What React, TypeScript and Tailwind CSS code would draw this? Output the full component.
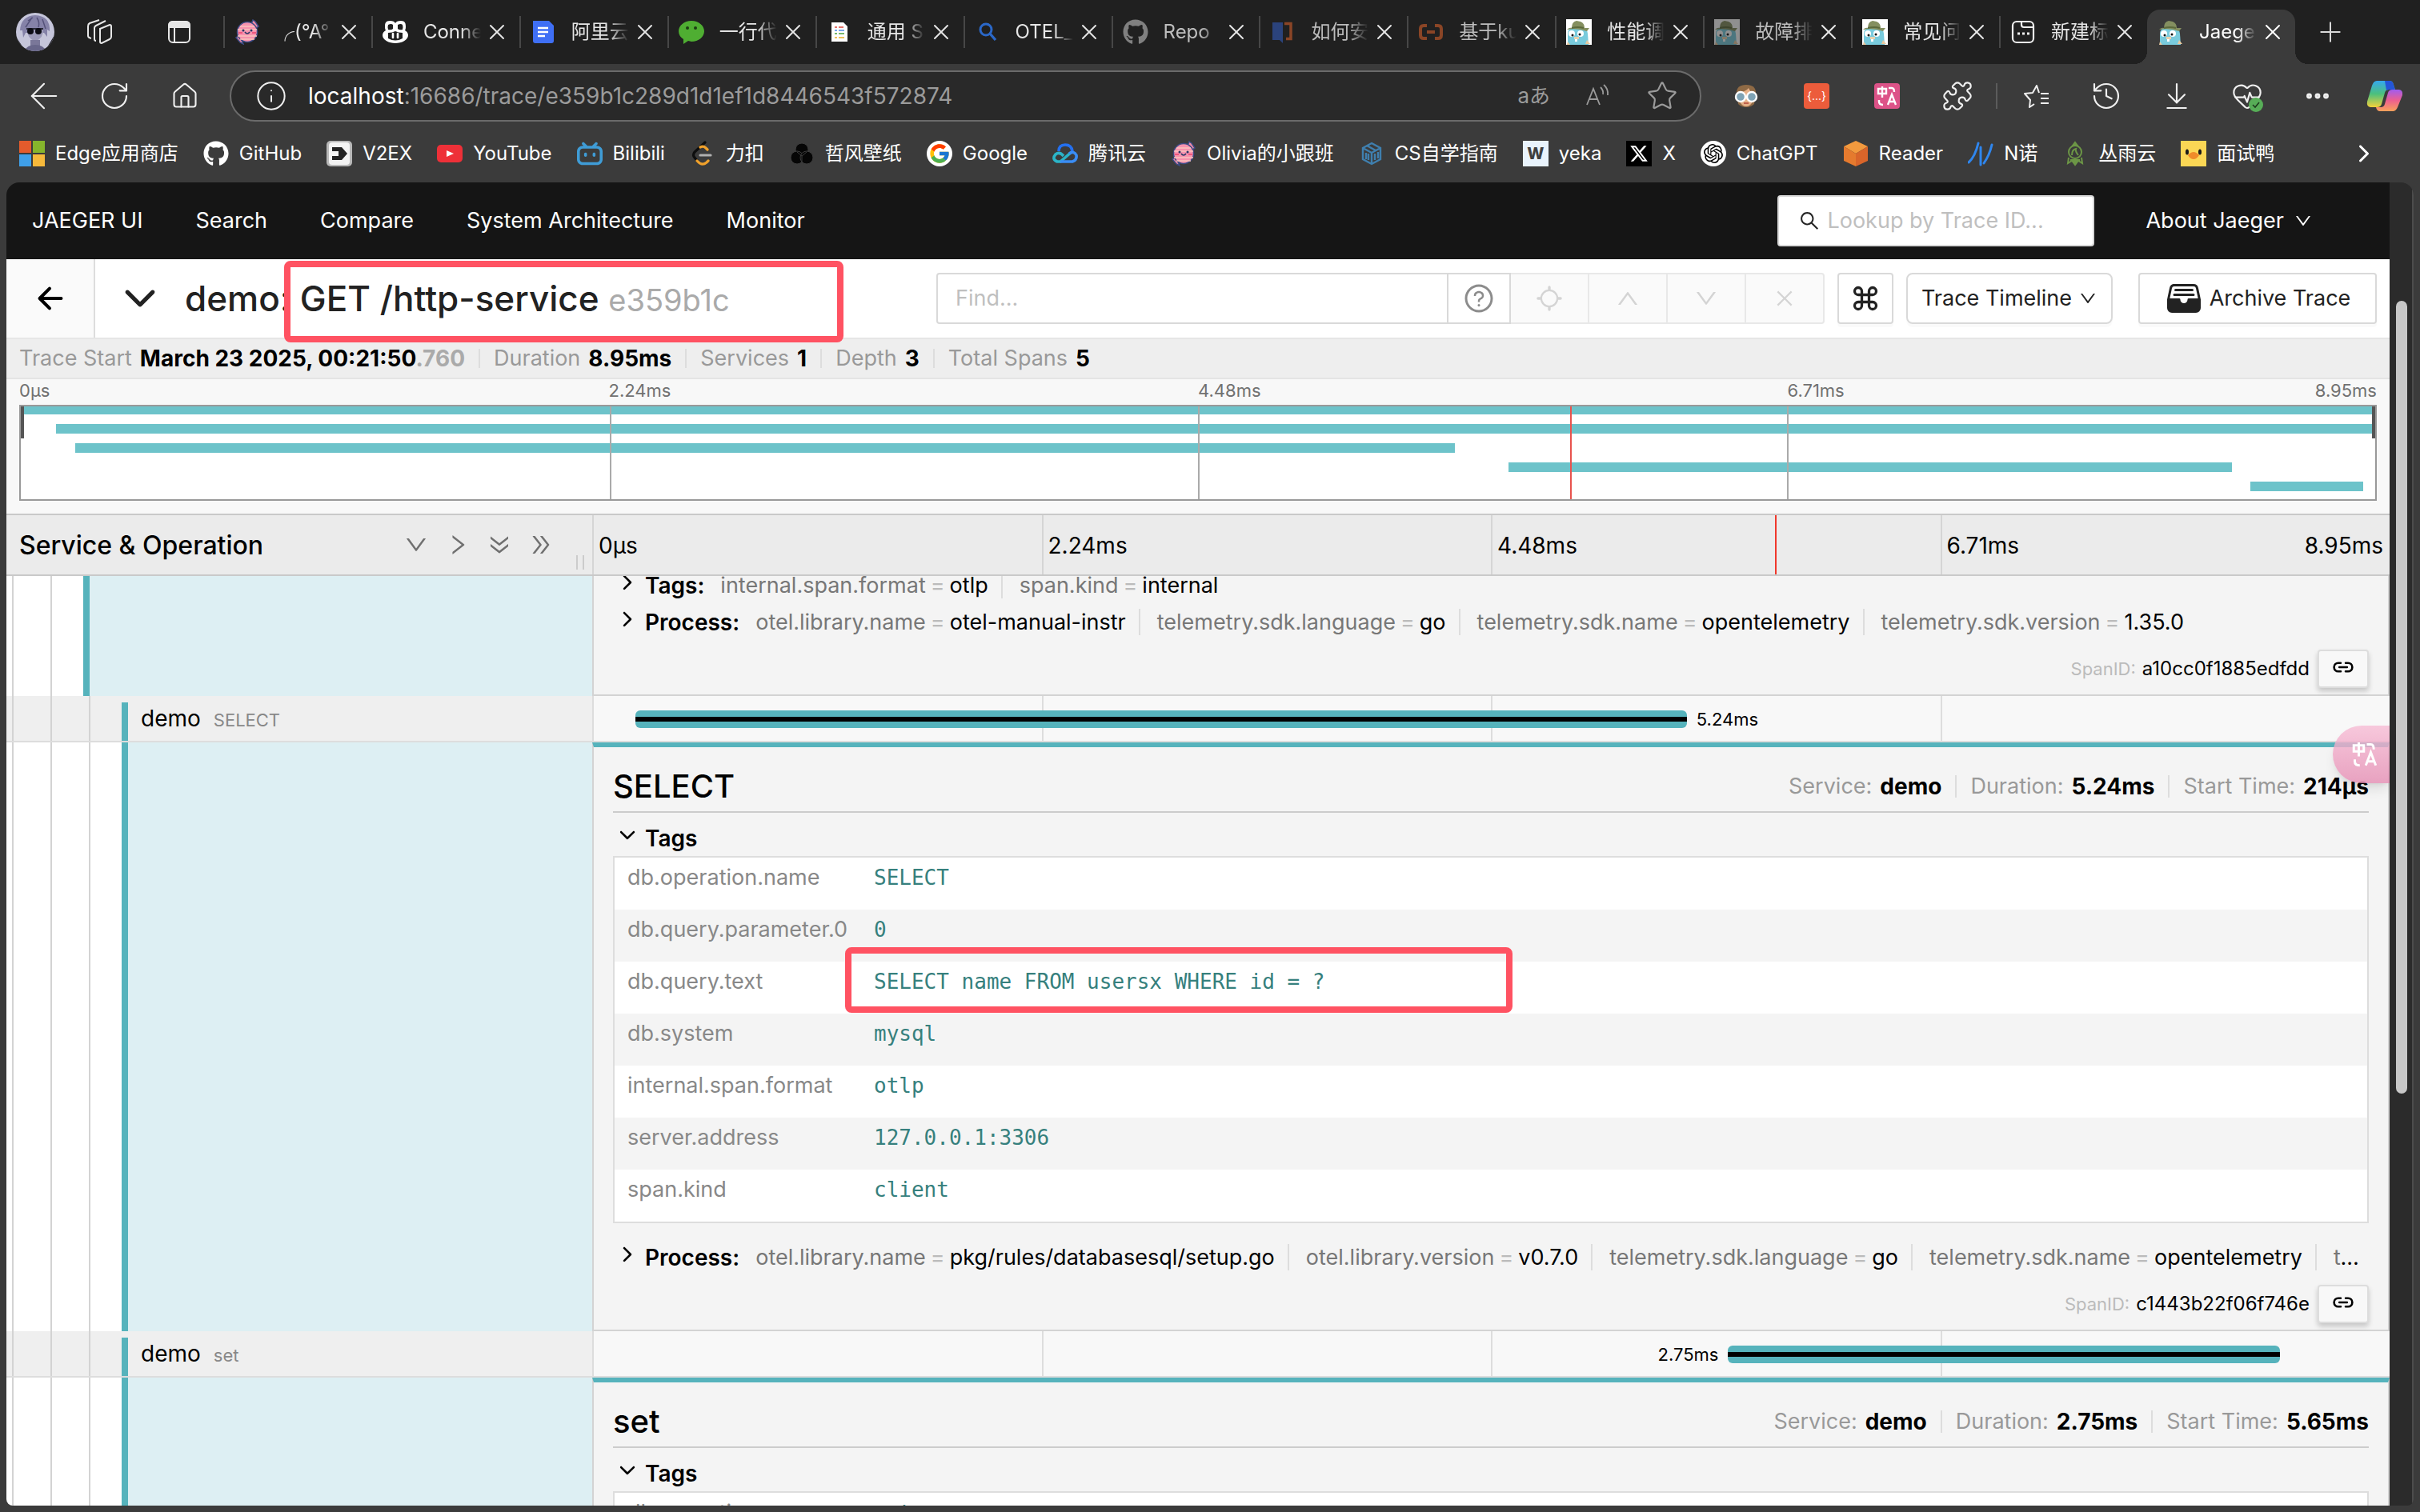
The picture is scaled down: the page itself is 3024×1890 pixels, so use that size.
import React, { useEffect, useRef } from 'react';
import {
  ArrowDownToLine,
  ArrowLeft,
  Command,
  Ellipsis,
  HeartPulse,
  History,
  House,
  Info,
  Plus,
  Puzzle,
  RotateCw,
  Star,
  X,
} from 'lucide-react';
import {
  AiOutlineClose,
  AiOutlineDoubleRight,
  AiOutlineDown,
  AiOutlineQuestionCircle,
  AiOutlineRight,
  AiOutlineSearch,
  AiOutlineUp,
} from 'react-icons/ai';
import { FaGithub, FaXTwitter } from 'react-icons/fa6';
import { FcGoogle } from 'react-icons/fc';
import { IoIosArrowDown, IoIosArrowForward } from 'react-icons/io';
import { IoArrowBack, IoFileTrayFull, IoLink, IoLocateOutline } from 'react-icons/io5';
import { SiBilibili, SiOpenai } from 'react-icons/si';

interface Tab {
  title: string;
  icon: React.ReactNode;
  dim?: boolean;
}

interface Bookmark {
  label: string;
  icon: React.ReactNode;
}

interface KeyValue {
  key: string;
  value: string;
}

interface Span {
  service: string;
  operation: string;
  duration: string;
  startTime: string;
  left: number;
  width: number;
  labelSide: 'left' | 'right';
  spanId: string;
  tags: KeyValue[];
  process: KeyValue[];
  highlight?: boolean;
}

const TICKS = ['0μs', '2.24ms', '4.48ms', '6.71ms'];
const TRACE_END = '8.95ms';
const CURSOR = 65.8;

// Favicons

const EggIcon = () => (
  <svg viewBox="0 0 32 32" className="size-8">
    <path d="M21 6l2-5 3 2 4 6-3 2zM9 26l2 5-4-2-5-6 3-2z" fill="#f08aa8" stroke="#3b4c84" strokeWidth="1.5" />
    <circle cx="16" cy="16" r="12.500" fill="#f793ae" stroke="#3b4c84" strokeWidth="1.5" />
    <path d="M7 9h18M4 13h24M4 21h24M7 25h18" stroke="#fbc4bd" strokeWidth="1.6" />
    <path d="M5 17h5M22 17h5" stroke="#f0567f" strokeWidth="2" />
    <circle cx="11" cy="14" r="1.500" fill="#2b3768" />
    <circle cx="21" cy="14" r="1.500" fill="#2b3768" />
    <path d="M13 16q3 4 6 0" stroke="#2b3768" strokeWidth="1.6" fill="none" />
  </svg>
);

const CopilotIcon = () => (
  <svg viewBox="0 0 32 32" className="size-8">
    <path
      d="M9 2c4 0 6 1 7 3 1-2 3-3 7-3 5 0 6 3 6 7 0 2 0 3-1 5 2 1 4 3 4 6 0 6-8 10-16 10S0 26 0 20c0-3 2-5 4-6-1-2-1-3-1-5 0-4 1-7 6-7z"
      fill="#fff"
    />
    <path d="M7 7q4-2 6 0v5q-2 2-6 1-1-3 0-6zM19 7q4-2 6 0 1 3 0 6-4 1-6-1zM7 17q5 0 9-2 4 2 9 2v7q-9 5-18 0z" fill="#202020" />
    <path d="M13 18v5M19 18v5" stroke="#fff" strokeWidth="2.6" strokeLinecap="round" />
  </svg>
);

const BlueDocIcon = () => (
  <svg viewBox="0 0 32 32" className="size-8">
    <path d="M3 2h20l6 6v19a3 3 0 0 1-3 3H6a3 3 0 0 1-3-3z" fill="#3f6ff5" />
    <path d="M9 11h13M9 16h13M9 21h9" stroke="#fff" strokeWidth="2.4" />
  </svg>
);

const ChatBubbleIcon = () => (
  <svg viewBox="0 0 32 32" className="size-8">
    <path d="M16 2c9 0 16 6 16 13s-7 13-16 13l-4-1-6 4v-6q-6-4-6-10C0 8 7 2 16 2z" fill="#4fae32" />
    <circle cx="11" cy="11" r="2" fill="#1d3d14" />
    <circle cx="21" cy="11" r="2" fill="#1d3d14" />
  </svg>
);

const SheetIcon = () => (
  <svg viewBox="0 0 32 32" className="size-8">
    <path d="M6 4h15l5 5v19H6z" fill="#fff" />
    <path d="M10 10h3m2 0h6" stroke="#e4756c" strokeWidth="2" />
    <path d="M10 14h3m2 0h7" stroke="#7aa7ea" strokeWidth="2" />
    <path d="M10 18h3m2 0h7" stroke="#79b86c" strokeWidth="2" />
    <path d="M10 23h3m2 0h7" stroke="#efc25a" strokeWidth="2" />
  </svg>
);

const MagnifierIcon = () => (
  <svg viewBox="0 0 32 32" className="size-8" fill="none" stroke="#2b68c8">
    <circle cx="14" cy="13" r="7" strokeWidth="3" />
    <path d="M19 18l7 8" strokeWidth="3.4" />
  </svg>
);

const BookIcon = () => (
  <svg viewBox="0 0 32 32" className="size-8">
    <path d="M3 4h13v26l-4-4H3z" fill="#2b437c" />
    <path d="M18 5.500h8v19h-6" stroke="#8a4526" strokeWidth="3.500" fill="none" />
  </svg>
);

const BracketIcon = () => (
  <svg viewBox="0 0 32 32" className="size-8" fill="none" stroke="#8a4526" strokeWidth="4">
    <path d="M11 8H7q-4 0-4 4v8q0 4 4 4h4M21 8h4q4 0 4 4v8q0 4-4 4h-4M11 16h10" />
  </svg>
);

const GopherIcon = ({ dim, paper = true }: { dim?: boolean; paper?: boolean }) => (
  <svg viewBox="0 0 32 32" className={dim ? 'size-8 opacity-50' : 'size-8'}>
    {paper && <path d="M0 0h32v32H0z" fill="#fff" />}
    <path d="M2 32V18q0-8 12-8t13 8l1 14z" fill="#79cbdd" />
    <path d="M1 13q3-3 6-2Q7 3 13 2l5 1q5 2 5 8l6 0-3 4q-12-4-25-2z" fill="#848f60" />
    <path d="M7 11q8-2 15 0" stroke="#5c6a3c" strokeWidth="2" fill="none" />
    <circle cx="7" cy="18" r="4" fill="#fff" />
    <circle cx="18" cy="18" r="4" fill="#fff" />
    <circle cx="8" cy="20" r="1.500" fill="#111" />
    <circle cx="17" cy="19" r="1.500" fill="#111" />
    <path d="M10 22h6v3h-6z" fill="#e8d1ae" />
    <path d="M11 25h3v3h-3z" fill="#fff" />
    <path d="M26 26l4 5h-6zM2 28l3 4H1z" fill="#e8c9a0" />
  </svg>
);

const NewTabIcon = () => (
  <svg viewBox="0 0 32 32" className="size-8" fill="none" stroke="#eee" strokeWidth="2.200">
    <rect x="3" y="3" width="26" height="26" rx="5" />
    <path d="M14 3v4q0 3 3 3h12" />
    <path d="M9 18h3M15 18h3M21 18h3" strokeWidth="3" />
  </svg>
);

const TABS: Tab[] = [
  { title: '╭(°A°', icon: <EggIcon /> },
  { title: 'Conne', icon: <CopilotIcon /> },
  { title: '阿里云', icon: <BlueDocIcon /> },
  { title: '一行代', icon: <ChatBubbleIcon /> },
  { title: '通用 S', icon: <SheetIcon /> },
  { title: 'OTEL_', icon: <MagnifierIcon /> },
  { title: 'Repo', icon: <FaGithub className="size-8 text-[#808080]" />, dim: true },
  { title: '如何安', icon: <BookIcon />, dim: true },
  { title: '基于ku', icon: <BracketIcon />, dim: true },
  { title: '性能调', icon: <GopherIcon /> },
  { title: '故障排', icon: <GopherIcon dim />, dim: true },
  { title: '常见问', icon: <GopherIcon /> },
  { title: '新建标', icon: <NewTabIcon /> },
];

const BOOKMARKS: Bookmark[] = [
  {
    label: 'Edge应用商店',
    icon: (
      <svg viewBox="0 0 32 32" className="size-8">
        <path d="M0 0h15v15H0z" fill="#e35b2c" />
        <path d="M17 0h15v15H17z" fill="#86b52c" />
        <path d="M0 17h15v15H0z" fill="#3f9fe8" />
        <path d="M17 17h15v15H17z" fill="#f6b93b" />
      </svg>
    ),
  },
  { label: 'GitHub', icon: <FaGithub className="size-8 text-white" /> },
  {
    label: 'V2EX',
    icon: (
      <svg viewBox="0 0 32 32" className="size-8">
        <rect width="32" height="32" rx="5" fill="#b9b9b9" />
        <rect x="3" y="2" width="26" height="28" rx="4" fill="#f3f3f3" />
        <path d="M7 8h12l7 8-7 8H7v-5h8v-6H7z" fill="#222" />
      </svg>
    ),
  },
  {
    label: 'YouTube',
    icon: (
      <svg viewBox="0 0 32 32" className="size-8">
        <rect y="5" width="32" height="22" rx="5" fill="#ee3038" />
        <path d="M12 12l9 4-9 4z" fill="#fff" />
      </svg>
    ),
  },
  { label: 'Bilibili', icon: <SiBilibili className="size-8 text-[#3f9cd6]" /> },
  {
    label: '力扣',
    icon: (
      <svg viewBox="0 0 32 32" className="size-8" fill="none" strokeWidth="3.200" strokeLinecap="round">
        <path d="M19 2L6 14q-3 4 0 7l4 5" stroke="#0d0d0d" />
        <path d="M9 25q6 7 12 2l2-2M13 8q4-2 7 1l2 2" stroke="#f0a12c" />
        <path d="M13 18h13" stroke="#b0b0b0" />
      </svg>
    ),
  },
  {
    label: '哲风壁纸',
    icon: (
      <svg viewBox="0 0 32 32" className="size-8" fill="#060606" stroke="#3d3d3d" strokeWidth="1">
        <circle cx="16" cy="11" r="8" />
        <circle cx="10" cy="21" r="8" />
        <circle cx="22" cy="21" r="8" />
        <path d="M10 14l6 5 6-5M16 19v8" fill="none" />
      </svg>
    ),
  },
  {
    label: 'Google',
    icon: (
      <span className="flex size-8 items-center justify-center rounded-full bg-white">
        <FcGoogle className="size-7" />
      </span>
    ),
  },
  {
    label: '腾讯云',
    icon: (
      <svg viewBox="0 0 32 32" className="size-8" fill="none" strokeWidth="3.600">
        <path d="M8 13q0-8 8-8t9 8" stroke="#2470f0" />
        <path d="M14 19q-5-6-10-2-5 6 2 9h4l14-12" stroke="#2bb4c8" />
        <path d="M10 26h15q6-2 5-8-3-6-9-2" stroke="#3a8df5" />
      </svg>
    ),
  },
  { label: 'Olivia的小跟班', icon: <EggIcon /> },
  {
    label: 'CS自学指南',
    icon: (
      <svg viewBox="0 0 32 32" className="size-8" fill="none" stroke="#3f7fae" strokeWidth="2.400">
        <path d="M16 3l11 6v14l-11 6-11-6V9zM5 9l11 6 11-6M16 15v14" />
        <path d="M10 6l11 6M9 15v8M12 16v8M20 16v8M24 14v8" />
      </svg>
    ),
  },
  {
    label: 'yeka',
    icon: (
      <span className="flex size-8 items-center justify-center bg-[#e9f3fc] text-xl font-extrabold text-[#3f3f3f]">W</span>
    ),
  },
  {
    label: 'X',
    icon: (
      <span className="flex size-8 items-center justify-center bg-black">
        <FaXTwitter className="size-6 text-white" />
      </span>
    ),
  },
  {
    label: 'ChatGPT',
    icon: (
      <span className="flex size-8 items-center justify-center rounded-full bg-white">
        <SiOpenai className="size-6 text-black" />
      </span>
    ),
  },
  {
    label: 'Reader',
    icon: (
      <svg viewBox="0 0 32 32" className="size-8">
        <path d="M16 0l15 7-15 9L1 7z" fill="#f39a3e" />
        <path d="M1 7l15 9v16L1 25z" fill="#e57a2e" />
        <path d="M31 7l-15 9v16l15-7z" fill="#d9652a" />
      </svg>
    ),
  },
  {
    label: 'N诺',
    icon: (
      <svg viewBox="0 0 32 32" className="size-8" fill="none" stroke="#2f86ee" strokeWidth="3" strokeLinecap="round">
        <path d="M1 27Q9 20 13 3M16 8v22M20 28Q27 18 30 5" />
      </svg>
    ),
  },
  {
    label: '丛雨云',
    icon: (
      <svg viewBox="0 0 32 32" className="size-8" fill="none" stroke="#6c9646" strokeWidth="2">
        <path d="M16 2l3 4h-6zM16 30l-3-4h6z" fill="#6c9646" />
        <circle cx="16" cy="14" r="8" />
        <path d="M12 18q0-7 5-8-1 3 3 8M8 21l-1 7 5-3M24 21l1 7-5-3M10 24h12" />
      </svg>
    ),
  },
  {
    label: '面试鸭',
    icon: (
      <svg viewBox="0 0 32 32" className="size-8">
        <path d="M0 0h32v32H0z" fill="#fbd755" />
        <ellipse cx="8" cy="14" rx="2" ry="3.500" fill="#1a1a1a" />
        <ellipse cx="24" cy="14" rx="2" ry="3.500" fill="#1a1a1a" />
        <path d="M9 18q7-8 14 0-3 5-7 5t-7-5z" fill="#f08c2a" />
      </svg>
    ),
  },
];

const NAV_LINKS = ['JAEGER UI', 'Search', 'Compare', 'System Architecture', 'Monitor'];

const MINIMAP_SPANS = [
  { left: 0, width: 100 },
  { left: 1.5, width: 98.5 },
  { left: 2.3, width: 58.6 },
  { left: 63.2, width: 30.7 },
  { left: 94.7, width: 4.8 },
];

const PARENT_TAGS: KeyValue[] = [
  { key: 'internal.span.format', value: 'otlp' },
  { key: 'span.kind', value: 'internal' },
];

const PARENT_PROCESS: KeyValue[] = [
  { key: 'otel.library.name', value: 'otel-manual-instr' },
  { key: 'telemetry.sdk.language', value: 'go' },
  { key: 'telemetry.sdk.name', value: 'opentelemetry' },
  { key: 'telemetry.sdk.version', value: '1.35.0' },
];

const SPANS: Span[] = [
  {
    service: 'demo',
    operation: 'SELECT',
    duration: '5.24ms',
    startTime: '214μs',
    left: 2.4,
    width: 58.5,
    labelSide: 'right',
    spanId: 'c1443b22f06f746e',
    highlight: true,
    tags: [
      { key: 'db.operation.name', value: 'SELECT' },
      { key: 'db.query.parameter.0', value: '0' },
      { key: 'db.query.text', value: 'SELECT name FROM usersx WHERE id = ?' },
      { key: 'db.system', value: 'mysql' },
      { key: 'internal.span.format', value: 'otlp' },
      { key: 'server.address', value: '127.0.0.1:3306' },
      { key: 'span.kind', value: 'client' },
    ],
    process: [
      { key: 'otel.library.name', value: 'pkg/rules/databasesql/setup.go' },
      { key: 'otel.library.version', value: 'v0.7.0' },
      { key: 'telemetry.sdk.language', value: 'go' },
      { key: 'telemetry.sdk.name', value: 'opentelemetry' },
      { key: 'telemetry.sdk.version', value: '1.35.0' },
    ],
  },
  {
    service: 'demo',
    operation: 'set',
    duration: '2.75ms',
    startTime: '5.65ms',
    left: 63.2,
    width: 30.7,
    labelSide: 'left',
    spanId: '5d0e7a41c2b98f36',
    tags: [
      { key: 'db.operation.name', value: 'set' },
      { key: 'db.system', value: 'redis' },
      { key: 'span.kind', value: 'client' },
    ],
    process: [{ key: 'otel.library.name', value: 'pkg/rules/goredis/setup.go' }],
  },
];

// Browser window

const TranslateGlyph = ({ className }: { className: string }) => (
  <svg viewBox="0 0 32 32" className={className} fill="none" stroke="#fff" strokeWidth="2.400">
    <path d="M5 7h10v6H5zM10 4v14M18 6h4q3 0 3 5M6 21v2q0 4 5 4M17 27l5-13 5 13M19 23h6" />
  </svg>
);

const TabStrip = () => (
  <div className="flex h-20 shrink-0 items-center bg-[#202020] pl-5">
    <svg viewBox="0 0 48 48" className="mr-10 size-12 rounded-full">
      <path d="M0 0h48v48H0z" fill="#c5c5da" />
      <path d="M0 30l12 18H0zM48 28L36 48h12z" fill="#23232b" />
      <path d="M5 22Q6 4 24 3q19 1 18 20l-3-2v9l-4-5H12l-3 6-1-9z" fill="#8582a8" />
      <path d="M14 20h20q1 11-10 16-11-5-10-16z" fill="#9c9ab8" />
      <path d="M18 34h12v8H18z" fill="#7a7799" />
      <path d="M10 48q4-8 14-8t14 8z" fill="#68668a" />
      <circle cx="18" cy="23" r="4" fill="#0c0c14" />
      <circle cx="28" cy="23" r="4" fill="#0c0c14" />
      <path d="M13 20h21" stroke="#0c0c14" strokeWidth="1.500" />
      <path d="M20 6l-8 12M26 6q4 6 2 12M33 8l4 12M15 10l6-4" stroke="#55527a" strokeWidth="1.500" fill="none" />
    </svg>
    <button aria-label="Workspaces" className="mr-[68px]">
      <svg viewBox="0 0 32 32" className="size-8" fill="none" stroke="#e6e6e6" strokeWidth="2">
        <path d="M17 12l12-5q2 0 2 2v13q0 2-2 3l-10 5q-2 0-2-2z" />
        <path d="M12 27q-2 0-2-2V11q0-2 2-3l12-6M6 24q-4-1-4-3V9q0-3 2-4l12-4" />
      </svg>
    </button>
    <button aria-label="Tab actions" className="mr-[39px]">
      <svg viewBox="0 0 32 32" className="size-8" fill="none" stroke="#e6e6e6" strokeWidth="2">
        <rect x="3" y="3" width="26" height="26" rx="5" />
        <path d="M3 10V8q0-5 5-5h16q5 0 5 5v2z" fill="#e6e6e6" />
        <path d="M10 11v18" />
      </svg>
    </button>
    <div className="flex min-w-0 flex-1 items-end self-stretch">
      {TABS.map(tab => (
        <div key={tab.title} className="flex h-[68px] min-w-0 flex-1 items-center pb-3">
          <span className="h-10 w-[2px] shrink-0 bg-[#474747]" />
          <button className="flex min-w-0 flex-1 items-center gap-[19px] pl-3 text-left">
            <span className="size-8 shrink-0">{tab.icon}</span>
            <span
              className={`min-w-0 flex-1 overflow-hidden text-2xl leading-8 whitespace-nowrap [mask-image:linear-gradient(to_right,#000_65%,transparent)] ${
                tab.dim ? 'text-[#bdbdbd]' : 'text-[#e6e6e6]'
              }`}
            >
              {tab.title}
            </span>
          </button>
          <button aria-label={`Close ${tab.title}`} className="mr-3 ml-1">
            <X className="size-8 text-[#e6e6e6]" strokeWidth={1.5} />
          </button>
        </div>
      ))}
      <div className="relative flex h-[68px] min-w-0 flex-1 items-center rounded-t-2xl bg-[#3b3b3b] pb-3">
        <span className="absolute bottom-0 -left-4 size-4 bg-[radial-gradient(circle_at_0_0,#202020_16px,#3b3b3b_16px)]" />
        <span className="absolute -right-4 bottom-0 size-4 bg-[radial-gradient(circle_at_100%_0,#202020_16px,#3b3b3b_16px)]" />
        <button className="flex min-w-0 flex-1 items-center gap-[19px] pl-3.5 text-left">
          <span className="size-8 shrink-0">
            <GopherIcon paper={false} />
          </span>
          <span className="min-w-0 flex-1 overflow-hidden text-2xl leading-8 whitespace-nowrap text-white [mask-image:linear-gradient(to_right,#000_65%,transparent)]">
            Jaege
          </span>
        </button>
        <button aria-label="Close Jaeger UI" className="mr-3 ml-1">
          <X className="size-8 text-white" strokeWidth={1.5} />
        </button>
      </div>
    </div>
    <button aria-label="New tab" className="mr-[92px] ml-6">
      <Plus className="size-10 text-[#d8d8d8]" strokeWidth={1.2} />
    </button>
  </div>
);

const ToolbarButton = ({ label, children }: { label: string; children: React.ReactNode }) => (
  <button aria-label={label} className="relative flex size-8 shrink-0 items-center justify-center">
    {children}
  </button>
);

const Toolbar = () => (
  <div className="flex shrink-0 items-center gap-10 py-2 pr-5 pl-[39px] text-[#efefef]">
    <div className="flex items-center gap-14">
      <ToolbarButton label="Back">
        <ArrowLeft className="size-13 shrink-0" strokeWidth={1} />
      </ToolbarButton>
      <ToolbarButton label="Reload">
        <RotateCw className="size-10 shrink-0" strokeWidth={1.3} />
      </ToolbarButton>
      <ToolbarButton label="Home">
        <House className="size-9 shrink-0" strokeWidth={1.4} />
      </ToolbarButton>
    </div>
    <div className="flex h-16 min-w-0 flex-1 items-center rounded-full border-2 border-[#6b6b6b] bg-[#292929] pr-[27px] pl-[30px]">
      <Info className="size-10 shrink-0" strokeWidth={1.2} />
      <div role="textbox" aria-label="Address" className="min-w-0 flex-1 truncate pl-[26px] text-[28px] leading-9 text-[#9b9b9b]">
        <span className="text-white">localhost</span>:16686/trace/e359b1c289d1d1ef1d8446543f572874
      </div>
      <div className="flex shrink-0 items-center gap-11 text-[#9b9b9b]">
        <button className="text-[26px] leading-8">aあ</button>
        <button aria-label="Read aloud">
          <svg viewBox="0 0 32 32" className="size-8" fill="none" stroke="currentColor" strokeWidth="1.800">
            <path d="M2 27L10 7l8 20M5 20h10M19 5q4 4 3 9M23 2q6 5 5 13" />
          </svg>
        </button>
        <button aria-label="Favorite">
          <Star className="size-10" strokeWidth={1.3} />
        </button>
      </div>
    </div>
    <div className="flex items-center gap-14">
      <button aria-label="User agent">
        <svg viewBox="0 0 32 32" className="size-8">
          <path d="M4 12Q4 2 16 2t12 10l-2 14q-4 4-10 4T6 26z" fill="#8f6a45" />
          <path d="M7 12q9-2 12-6 2 5 6 6l-1 11q-3 6-8 6t-8-6z" fill="#e6b088" />
          <circle cx="9" cy="17" r="6" fill="#7fa3b5" stroke="#fff" strokeWidth="2.400" />
          <circle cx="23" cy="17" r="6" fill="#7fa3b5" stroke="#fff" strokeWidth="2.400" />
          <path d="M13 25h6" stroke="#b0473a" strokeWidth="1.500" />
        </svg>
      </button>
      <button aria-label="JSON viewer" className="flex size-8 items-center justify-center rounded bg-[#ec5c3b] text-sm leading-none text-white">
        {'{...}'}
      </button>
      <button aria-label="Translate" className="size-8 rounded bg-[#dd5388]">
        <TranslateGlyph className="size-8" />
      </button>
      <ToolbarButton label="Extensions">
        <Puzzle className="size-10 shrink-0" strokeWidth={1.3} />
      </ToolbarButton>
    </div>
    <div className="-mx-2 h-8 w-[2px] bg-[#5c5c5c]" />
    <div className="flex items-center gap-14">
      <button aria-label="Favorites list">
        <svg viewBox="0 0 32 32" className="size-8" fill="none" stroke="currentColor" strokeWidth="2" strokeLinejoin="round">
          <path d="M20 12l-3-9-5 9-10 1 7 8-1 9 6-4M22 13h10M22 19h10M22 25h10" />
        </svg>
      </button>
      <ToolbarButton label="History">
        <History className="size-10 shrink-0" strokeWidth={1.3} />
      </ToolbarButton>
      <ToolbarButton label="Downloads">
        <ArrowDownToLine className="size-10 shrink-0" strokeWidth={1.3} />
      </ToolbarButton>
      <ToolbarButton label="Browser essentials">
        <HeartPulse className="size-10 shrink-0" strokeWidth={1.3} />
        <svg viewBox="0 0 18 18" className="absolute -right-1 -bottom-1 size-[18px]">
          <circle cx="9" cy="9" r="9" fill="#57ad57" />
          <path d="M5 9l3 3 5-6" fill="none" stroke="#1d3b1d" strokeWidth="1.600" />
        </svg>
      </ToolbarButton>
      <ToolbarButton label="More">
        <Ellipsis className="size-9 shrink-0" strokeWidth={2.6} />
      </ToolbarButton>
    </div>
    <button aria-label="Copilot" className="ml-1">
      <svg viewBox="0 0 48 48" className="size-12">
        <defs>
          <linearGradient id="copilotLeft" x1="0" y1="0" x2="0" y2="1">
            <stop offset="0" stopColor="#35a7ee" />
            <stop offset="0.500" stopColor="#4cc07c" />
            <stop offset="1" stopColor="#f4d03a" />
          </linearGradient>
          <linearGradient id="copilotRight" x1="0" y1="0" x2="0" y2="1">
            <stop offset="0" stopColor="#a05cf0" />
            <stop offset="0.500" stopColor="#ee5f8f" />
            <stop offset="1" stopColor="#f9a25a" />
          </linearGradient>
        </defs>
        <path d="M14 5h16q4 0 5 5l2 6h-8q-4 0-5 4l-4 14q-1 4-6 4H6q-5-1-4-7L8 11q2-6 6-6z" fill="url(#copilotLeft)" />
        <path d="M24 5h6q4 0 5 5l2 6h-8l-3 1z" fill="#2455d8" />
        <path d="M34 43H18q-4 0-5-5h6q4 0 5-4l4-14q1-4 6-4h8q5 1 4 7l-6 15q-2 5-6 5z" fill="url(#copilotRight)" />
      </svg>
    </button>
  </div>
);

const BookmarksBar = () => (
  <div className="flex shrink-0 items-center gap-[31px] pt-4 pr-[54px] pb-5 pl-6 text-2xl leading-8 text-white">
    {BOOKMARKS.map(bookmark => (
      <a key={bookmark.label} href="#" className="flex shrink-0 items-center gap-[13px]">
        {bookmark.icon}
        <span>{bookmark.label}</span>
      </a>
    ))}
    <button aria-label="More bookmarks" className="ml-auto">
      <IoIosArrowForward className="size-8" />
    </button>
  </div>
);

// Jaeger header

const JaegerNav = () => (
  <nav className="flex shrink-0 items-center bg-[#151515] px-8 py-4 text-[27px] leading-9 text-white">
    <div className="flex items-center gap-[66px]">
      {NAV_LINKS.map(link => (
        <a key={link} href="#">
          {link}
        </a>
      ))}
    </div>
    <label className="ml-auto flex h-16 w-[396px] items-center gap-2 rounded border-2 border-[#d9d9d9] bg-white px-6">
      <AiOutlineSearch className="size-7 shrink-0 text-[#262626]" />
      <input
        type="text"
        aria-label="Lookup by Trace ID"
        placeholder="Lookup by Trace ID..."
        className="w-full min-w-0 text-black outline-none placeholder:text-[#bfbfbf]"
      />
    </label>
    <button className="mr-16 ml-16 flex items-center gap-3">
      About Jaeger
      <AiOutlineDown className="size-6" />
    </button>
  </nav>
);

const TraceHeader = () => (
  <div className="relative flex shrink-0 items-center border-b-2 border-[#e6e6e6] bg-white pr-4">
    <a href="#" aria-label="Back to search" className="flex w-[111px] items-center justify-center self-stretch border-r-2 border-[#ddd] bg-[#fafafa]">
      <IoArrowBack className="size-11 text-black" />
    </a>
    <button className="flex min-w-0 flex-1 items-center gap-7 py-[17px] pl-7 text-left">
      <IoIosArrowDown className="size-14 shrink-0 text-[#222]" />
      <h1 className="text-[44px] leading-[64px] font-medium whitespace-nowrap text-[#222]">
        demo: GET /http-service <small className="text-[38px] leading-none font-normal text-[#aaa]">e359b1c</small>
      </h1>
    </button>
    <div className="pointer-events-none absolute top-[2px] left-[347px] z-10 h-[102px] w-[699px] rounded-lg border-8 border-[#ff5262]" />
    <div className="flex h-16 shrink-0 items-stretch text-[27px]">
      <input
        type="text"
        aria-label="Find"
        placeholder="Find..."
        className="w-[640px] rounded-l border-2 border-[#d9d9d9] px-[22px] outline-none placeholder:text-[#bfbfbf]"
      />
      <button aria-label="Help" className="flex w-[78px] items-center justify-center border-y-2 border-r-2 border-[#d9d9d9] text-[#8c8c8c]">
        <AiOutlineQuestionCircle className="size-10" />
      </button>
      <button aria-label="Locate" className="flex w-[98px] items-center justify-center border-y-2 border-r-2 border-[#e8e8e8] bg-[#fafafa] text-[#d4d4d4]">
        <IoLocateOutline className="size-9" />
      </button>
      <button aria-label="Previous" className="flex w-[98px] items-center justify-center border-y-2 border-r-2 border-[#e8e8e8] bg-[#fafafa] text-[#d4d4d4]">
        <AiOutlineUp className="size-8" />
      </button>
      <button aria-label="Next" className="flex w-[98px] items-center justify-center border-y-2 border-r-2 border-[#e8e8e8] bg-[#fafafa] text-[#d4d4d4]">
        <AiOutlineDown className="size-8" />
      </button>
      <button aria-label="Clear" className="flex w-[98px] items-center justify-center rounded-r border-y-2 border-r-2 border-[#e8e8e8] bg-[#fafafa] text-[#d4d4d4]">
        <AiOutlineClose className="size-7" />
      </button>
    </div>
    <button aria-label="Keyboard shortcuts" className="ml-4 flex h-16 w-[70px] items-center justify-center rounded border-2 border-[#d9d9d9] shadow-[0_4px_0_#00000005]">
      <Command className="size-9 text-[#222]" strokeWidth={2.2} />
    </button>
    <button className="ml-4 flex h-16 w-[258px] items-center justify-center gap-2 rounded-lg border-2 border-[#d9d9d9] text-[27px] whitespace-nowrap text-[#222] shadow-[0_4px_0_#00000005]">
      Trace Timeline
      <AiOutlineDown className="size-6 shrink-0" />
    </button>
    <button className="ml-8 flex h-16 w-[298px] items-center justify-center gap-2 rounded border-2 border-[#d9d9d9] text-[27px] whitespace-nowrap text-[#222] shadow-[0_4px_0_#00000005]">
      <IoFileTrayFull className="size-12 shrink-0" />
      Archive Trace
    </button>
  </div>
);

const SummaryItem = ({ label, children }: { label: string; children: React.ReactNode }) => (
  <li className="flex gap-2.5 border-l-2 border-[#ddd] px-[17px] leading-6 first:border-l-0 first:pl-0">
    <span className="text-[27px] text-[#999]">{label}</span>
    <strong className="font-bold text-black">{children}</strong>
  </li>
);

const Summary = () => (
  <ul className="flex shrink-0 items-center border-b-2 border-[#e4e4e4] bg-[#eee] px-4 py-3 text-[28px]">
    <SummaryItem label="Trace Start">
      March 23 2025, 00:21:50<span className="text-[#aaa]">.760</span>
    </SummaryItem>
    <SummaryItem label="Duration">8.95ms</SummaryItem>
    <SummaryItem label="Services">1</SummaryItem>
    <SummaryItem label="Depth">3</SummaryItem>
    <SummaryItem label="Total Spans">5</SummaryItem>
  </ul>
);

const Minimap = () => (
  <div className="shrink-0 bg-[#f8f8f8] px-4 pb-4">
    <div className="flex text-[22px] leading-7 text-[#717171]">
      {TICKS.map(tick => (
        <span key={tick} className="min-w-0 flex-1 pb-1">
          {tick}
        </span>
      ))}
      <span className="flex w-0 justify-end">{TRACE_END}</span>
    </div>
    <div className="relative overflow-hidden border-2 border-[#999] bg-white">
      <div className="flex flex-col gap-3 pb-2.5">
        {MINIMAP_SPANS.map(span => (
          <div key={span.left} className="h-3 first:h-2.5">
            <div className="h-full bg-[#6dc3ca]" style={{ marginLeft: `${span.left}%`, width: `${span.width}%` }} />
          </div>
        ))}
      </div>
      <div className="absolute inset-0 grid grid-cols-4">
        <span />
        <span className="border-l-2 border-[#aaa]" />
        <span className="border-l-2 border-[#aaa]" />
        <span className="border-l-2 border-[#aaa]" />
      </div>
      <span className="absolute inset-y-0 w-[2px] bg-[#e8534e]" style={{ left: `${CURSOR}%` }} />
      <span className="absolute top-0 left-0 h-10 w-1 bg-[#555]" />
      <span className="absolute top-0 right-0 h-10 w-1 bg-[#555]" />
    </div>
  </div>
);

// Timeline

const TimelineHeader = () => (
  <div className="flex shrink-0 border-y-2 border-[#c9c9c9] bg-[#ebebeb] leading-9 text-black">
    <div className="flex w-[732px] shrink-0 items-center pr-2.5 pl-4">
      <h3 className="pt-0.5 text-[32px] font-medium whitespace-nowrap">Service &amp; Operation</h3>
      <div className="ml-auto flex items-center gap-5 text-[#707070]">
        <button aria-label="Expand +1">
          <AiOutlineDown className="size-8" />
        </button>
        <button aria-label="Collapse +1">
          <AiOutlineRight className="size-8" />
        </button>
        <button aria-label="Expand all">
          <AiOutlineDoubleRight className="size-8 rotate-90" />
        </button>
        <button aria-label="Collapse all">
          <AiOutlineDoubleRight className="size-8" />
        </button>
      </div>
      <span className="mb-1.5 ml-7 h-[18px] w-2.5 self-end border-x-2 border-[#ccc]" />
    </div>
    <div className="relative flex min-w-0 flex-1 text-[28px]">
      {TICKS.map(tick => (
        <div key={tick} className="min-w-0 flex-1 border-l-2 border-[#d5d5d5] pt-5 pb-[18px] pl-1.5">
          {tick}
        </div>
      ))}
      <span className="absolute top-5 right-2">{TRACE_END}</span>
      <span className="absolute inset-y-0 w-[2px] bg-[#f0382c]" style={{ left: `${CURSOR}%` }} />
    </div>
  </div>
);

const Guides = ({ depth }: { depth: number }) => (
  <div className="flex shrink-0 pl-[7px]">
    {Array.from({ length: depth }, (_, i) => (
      <span key={i} className="w-12 border-l-2 border-[#d3d3d3] last:w-[41px]" />
    ))}
  </div>
);

const DetailTree = ({ depth }: { depth: number }) => (
  <div className="flex w-[732px] shrink-0 bg-white">
    <Guides depth={depth} />
    <div className="flex-1 border-l-8 border-[#56b3bc] bg-[#ddeff3]" />
  </div>
);

const KeyValueSummary = ({ label, items }: { label: string; items: KeyValue[] }) => (
  <button className="flex w-full min-w-0 text-left text-[27px] leading-9">
    <IoIosArrowForward className="mr-2 ml-1 size-7 shrink-0 text-black" />
    <strong className="mr-5 shrink-0 text-[28px] font-semibold text-black">{label}:</strong>
    <span className="min-w-0 flex-1 truncate text-black">
      {items.map(item => (
        <span key={item.key} className="mr-[21px] border-r-2 border-[#ddd] pr-4 last:mr-0 last:border-r-0">
          <span className="text-[#777]">{item.key}</span>
          <span className="px-1.5 text-[#bbb]">=</span>
          {item.value}
        </span>
      ))}
    </span>
  </button>
);

const SpanIdRow = ({ id }: { id: string }) => (
  <div className="mt-4 flex items-center justify-end text-2xl leading-7">
    <span className="text-[22px] text-[#bbb]">SpanID:</span>
    <span className="ml-2 text-black">{id}</span>
    <button aria-label="Copy deep link" className="ml-2.5 flex h-12 w-16 items-start justify-center rounded border-2 border-[#ddd] bg-[#f8f8f8] pt-1.5 shadow-[0_4px_6px_#00000030]">
      <IoLink className="size-7 text-black" />
    </button>
  </div>
);

const SpanRow = ({ span }: { span: Span }) => (
  <div className="flex h-[58px] shrink-0 border-b-2 border-[#ddd]">
    <div className="flex w-[732px] shrink-0 bg-[#efefef]">
      <Guides depth={3} />
      <button className="mt-2 flex flex-1 items-baseline gap-4 border-l-8 border-[#56b3bc] pl-4 text-left text-[28px] leading-10 text-black">
        {span.service}
        <small className="text-[22px] text-[#888]">{span.operation}</small>
      </button>
    </div>
    <div className="relative min-w-0 flex-1 bg-[#f8f8f8]">
      <div className="grid h-full grid-cols-4">
        {TICKS.map(tick => (
          <span key={tick} className="border-l-2 border-[#ddd]" />
        ))}
      </div>
      <div
        className="absolute top-[18px] flex h-[22px] items-center rounded-md bg-[#56b3bc]"
        style={{ left: `${span.left}%`, width: `${span.width}%` }}
      >
        <span className="h-1.5 w-full bg-black" />
        <span className={`absolute text-[22px] leading-7 text-black ${span.labelSide === 'right' ? 'left-full ml-3' : 'right-full mr-3'}`}>
          {span.duration}
        </span>
      </div>
    </div>
  </div>
);

const OverviewItem = ({ label, value }: { label: string; value: string }) => (
  <li className="flex gap-2.5 border-l-2 border-[#ddd] px-[17px] leading-7 first:border-l-0 last:pr-0">
    <span className="text-[27px] text-[#999]">{label}</span>
    <strong className="font-bold text-black">{value}</strong>
  </li>
);

const SpanDetail = ({ span }: { span: Span }) => (
  <div className="flex shrink-0">
    <DetailTree depth={3} />
    <div className="min-w-0 flex-1 border-x-2 border-t-[6px] border-b-2 border-[#d3d3d3] border-t-[#56b3bc] bg-[#f4f4f4] px-6 pb-2">
      <div className="flex items-center justify-between border-b-2 border-[#ccc] pt-[25px] pb-[7px]">
        <h2 className="text-[40px] leading-[48px] font-medium text-black">{span.operation}</h2>
        <ul className="flex text-[28px]">
          <OverviewItem label="Service:" value={span.service} />
          <OverviewItem label="Duration:" value={span.duration} />
          <OverviewItem label="Start Time:" value={span.startTime} />
        </ul>
      </div>
      <button className="mt-3.5 flex items-start text-[28px] leading-9 font-semibold text-black">
        <IoIosArrowDown className="mr-2 ml-1 size-7" />
        Tags
      </button>
      <div className="relative mt-1 border-2 border-[#ddd] bg-white">
        <table className="w-full">
          <tbody>
            {span.tags.map(tag => (
              <tr key={tag.key} className="h-[65px] align-top even:bg-[#f4f4f4]">
                <td className="w-[308px] pt-[7px] pl-4 text-[27px] leading-9 text-[#888]">{tag.key}</td>
                <td className="pt-[7px] pl-4 font-['DejaVu_Sans_Mono',monospace] text-[26px] leading-9 text-[#36807d]">{tag.value}</td>
              </tr>
            ))}
          </tbody>
        </table>
        {span.highlight && (
          <div className="pointer-events-none absolute top-[112px] left-[288px] h-[82px] w-[834px] rounded-lg border-8 border-[#ff5262]" />
        )}
      </div>
      <div className="mt-[25px]">
        <KeyValueSummary label="Process" items={span.process} />
      </div>
      <SpanIdRow id={span.spanId} />
    </div>
  </div>
);

const Timeline = () => {
  const scroller = useRef<HTMLDivElement>(null);

  useEffect(() => {
    if (scroller.current) scroller.current.scrollTop = 6;
  }, []);

  return (
    <div ref={scroller} className="flex min-h-0 flex-1 flex-col overflow-y-auto [scrollbar-width:none]">
      <div className="flex shrink-0">
        <DetailTree depth={2} />
        <div className="min-w-0 flex-1 border-x-2 border-b-2 border-[#d3d3d3] bg-[#f4f4f4] px-6 pb-2">
          <div className="flex flex-col gap-2.5">
            <KeyValueSummary label="Tags" items={PARENT_TAGS} />
            <KeyValueSummary label="Process" items={PARENT_PROCESS} />
          </div>
          <SpanIdRow id="a10cc0f1885edfdd" />
        </div>
      </div>
      {SPANS.map(span => (
        <React.Fragment key={span.operation}>
          <SpanRow span={span} />
          <SpanDetail span={span} />
        </React.Fragment>
      ))}
    </div>
  );
};

const App = () => (
  <div className="flex h-screen flex-col overflow-hidden bg-[#3b3b3b] font-['Inter','Noto_Sans_CJK_SC',sans-serif]">
    <TabStrip />
    <Toolbar />
    <BookmarksBar />
    <div className="mx-2 mb-2 flex min-h-0 flex-1 overflow-hidden rounded-2xl rounded-b-lg">
      <main className="relative flex min-w-0 flex-1 flex-col">
        <JaegerNav />
        <TraceHeader />
        <Summary />
        <Minimap />
        <TimelineHeader />
        <Timeline />
        <button
          aria-label="Translate page"
          className="absolute top-[679px] right-0 flex h-[72px] w-[71px] items-center rounded-l-full bg-linear-to-b from-[#f7bcd5]/80 to-[#e58db3]/80 pl-5 shadow-lg"
        >
          <TranslateGlyph className="size-10" />
        </button>
      </main>
      <div className="w-[30px] shrink-0 border-r-2 border-[#4c4c4c] bg-[#2b2b2b] px-2 pt-[148px]">
        <div className="h-[991px] w-3.5 rounded-full bg-[#c8c8c8]" />
      </div>
    </div>
  </div>
);

export default App;
